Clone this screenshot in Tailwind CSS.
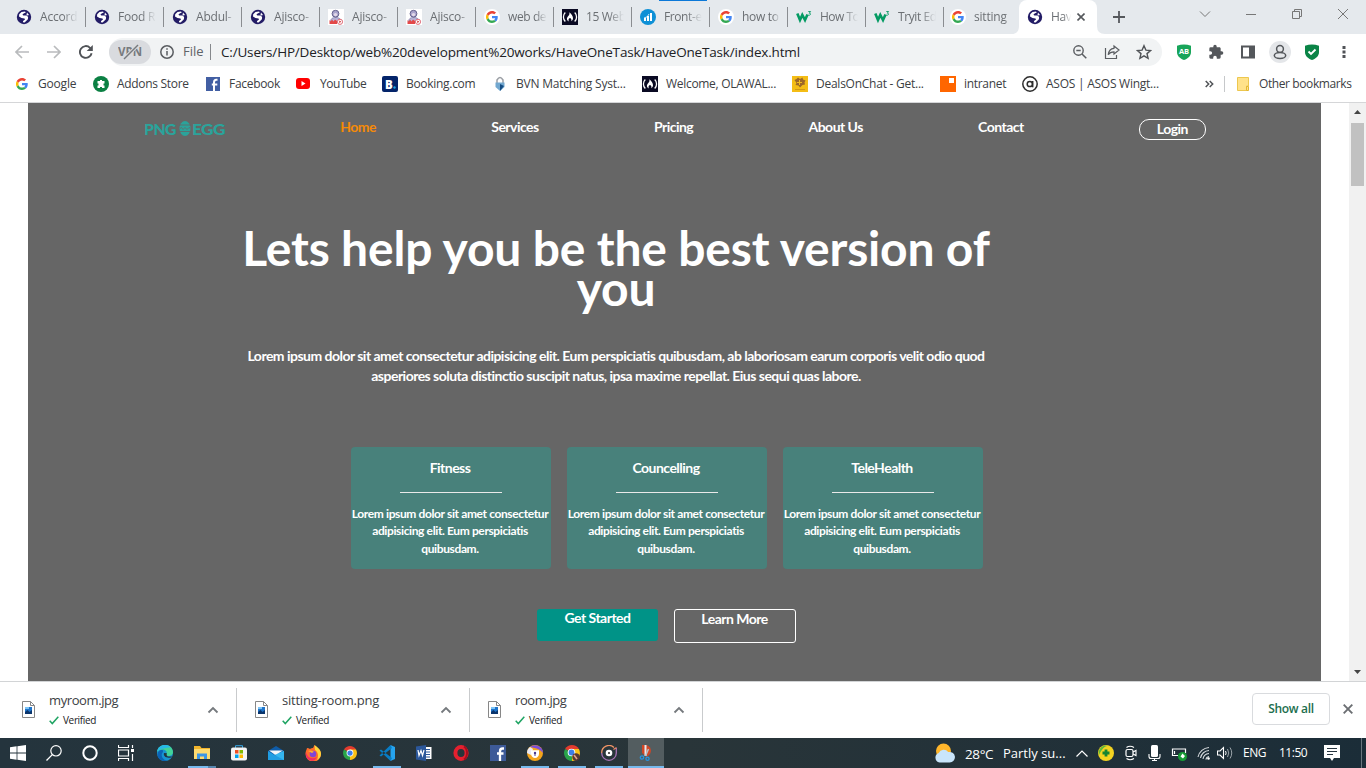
<!DOCTYPE html>
<html lang="en">
<head>
<meta charset="utf-8">
<title>HaveOneTask</title>
<script src="https://cdn.jsdelivr.net/npm/@tailwindcss/browser@4"></script>
</head>
<body class="w-[1366px] h-[768px] overflow-hidden bg-white font-['Open_Sans',sans-serif] text-[12px] text-[#3c4043]">
<svg class="hidden">
  <symbol id="globe" viewBox="0 0 16 16"><circle cx="8" cy="8" r="7.2" fill="#231c66"/><path d="M3.200 5.200 5.500 3l3.500-.6.800 1-2.200 1.200-1.200 1.200 1 .8h3.200l1.500 1.500-.2 2.200-2 1.900-1.300 1.300-1.700-.3.200-1.300 1.900-1.300-.5-1.200-3-.3L3 7.500z" fill="#fff"/><path d="m11 3.500 2 2.500-1.500.6-1-.6z" fill="#fff"/></symbol>
  <symbol id="google" viewBox="0 0 48 48"><path fill="#EA4335" d="M24 9.500c3.540 0 6.710 1.220 9.210 3.600l6.850-6.850C35.900 2.380 30.470 0 24 0 14.620 0 6.510 5.380 2.560 13.220l7.980 6.190C12.430 13.720 17.740 9.500 24 9.500z"/><path fill="#4285F4" d="M46.980 24.550c0-1.570-.15-3.090-.38-4.550H24v9.020h12.940c-.58 2.960-2.260 5.480-4.780 7.180l7.730 6c4.510-4.180 7.090-10.360 7.090-17.650z"/><path fill="#FBBC05" d="M10.530 28.590a14.500 14.500 0 0 1 0-9.180l-7.980-6.190a24 24 0 0 0 0 21.560z"/><path fill="#34A853" d="M24 48c6.480 0 11.930-2.130 15.890-5.810l-7.730-6c-2.150 1.450-4.920 2.300-8.160 2.300-6.260 0-11.570-4.220-13.470-9.910l-7.980 6.190C6.510 42.620 14.620 48 24 48z"/></symbol>
  <symbol id="googletab" viewBox="0 0 16 16"><circle cx="8" cy="8" r="8" fill="#fff"/><use href="#google" x="2" y="2" width="12" height="12"/></symbol>
  <symbol id="person" viewBox="0 0 16 16"><path fill="#fff" d="M0 0h16v16H0z"/><path d="M2.500 13.500c0-4 1.800-5 5.500-5s5 2 5 4" fill="#b7b4d8" stroke="#7d7aa8" stroke-width=".7"/><circle cx="7.500" cy="4.700" r="3.400" fill="#a9a4cc" stroke="#66628e"/><circle cx="7.500" cy="5.600" r="1.700" fill="#e3d9e8"/><path d="M1.500 15v-4l1.200 1.500L4 10.500l1.500 2 1.500-2 2 1.500v3z" fill="#e34848"/><circle cx="12" cy="12.800" r="2.600" fill="#fff" stroke="#df6b77"/><path d="M11.300 11.500v2.600l2-1.300z" fill="#c22"/></symbol>
  <symbol id="fcc" viewBox="0 0 16 16"><path fill="#0a0a23" d="M0 0h16v16H0z"/><path d="M3.300 3.500C.8 6 .8 10 3.300 12.500M12.700 3.500c2.500 2.500 2.500 6.500 0 9" stroke="#fff" stroke-width="1.300" fill="none"/><path d="M7.200 3.300c2.200 1.300 3.700 4 3.800 5.700.1 1.700-.8 2.800-2 3.300.8-1.300.6-2-.6-3.300-.4.500-.8.400-.8-.1-1.200 1.100-1.500 2.300-.6 3.400-3-1-2.300-3.800-.5-5.600.9-.9 1.200-1.900.7-3.400z" fill="#fff"/></symbol>
  <symbol id="bars" viewBox="0 0 16 16"><circle cx="8" cy="8" r="8" fill="#0e90d6"/><path d="M4 9h2v3H4zM7 7h2v5H7zM10 4h2v8h-2z" fill="#fff"/><path d="M4 9q4-.5 5-4" fill="none" stroke="#fff" stroke-width=".8"/></symbol>
  <symbol id="w3" viewBox="0 0 16 16"><path d="M1.300 4.500 4 11l2.300-5L9 11l2.500-5.500" fill="none" stroke="#049b63" stroke-width="2.600"/><path d="M12.300 2.500h2.300L13.300 4.200c2 0 1.700 2.300-1 2" fill="none" stroke="#049b63" stroke-width=".9"/></symbol>
  <symbol id="imgfile" viewBox="0 0 13 17"><path d="M.5.500h8l4 4v12H.5z" fill="#fff" stroke="#878787"/><path d="M8.500.500v4h4" fill="none" stroke="#878787"/><path fill="#1f75cb" d="M3 6h7v7H3z"/><path d="m3 11 2.500-2 2 2L10 9v4H3z" fill="#0b356c"/><path fill="#7cc5f8" d="M3 6h4v2H3z"/></symbol>
  <symbol id="up" viewBox="0 0 12 8"><path d="m1.500 6.500 4.500-4.500 4.500 4.500" fill="none" stroke="#75797d" stroke-width="1.800"/></symbol>
  <symbol id="tick" viewBox="0 0 10 9"><path d="m.7 4.700 2.600 2.900L9.300.8" fill="none" stroke="#1fa463" stroke-width="1.500"/></symbol>
</svg>

<div class="flex h-full flex-col">
<!-- tab strip -->
<header class="relative flex h-[34px] shrink-0 bg-[#e5e9ed] pl-2 text-[#6b6f73]">
  <div class="absolute left-[659px] top-0 h-px w-12 bg-[#0b78d8]"></div>
  <div class="flex w-[1011px] shrink-0 tracking-[-0.2px]">
    <div class="flex min-w-0 flex-1 items-center pl-2"><svg class="size-4 shrink-0"><use href="#globe"/></svg><span class="ml-2 w-[38px] whitespace-nowrap mask-r-from-60%">Accord</span><i class="ml-auto h-5 w-px bg-[#8a8d91]"></i></div>
    <div class="flex min-w-0 flex-1 items-center pl-2"><svg class="size-4 shrink-0"><use href="#globe"/></svg><span class="ml-2 w-[38px] whitespace-nowrap mask-r-from-60%">Food R</span><i class="ml-auto h-5 w-px bg-[#8a8d91]"></i></div>
    <div class="flex min-w-0 flex-1 items-center pl-2"><svg class="size-4 shrink-0"><use href="#globe"/></svg><span class="ml-2 w-[38px] whitespace-nowrap mask-r-from-80%">Abdul-</span><i class="ml-auto h-5 w-px bg-[#8a8d91]"></i></div>
    <div class="flex min-w-0 flex-1 items-center pl-2"><svg class="size-4 shrink-0"><use href="#globe"/></svg><span class="ml-2 w-[38px] whitespace-nowrap mask-r-from-80%">Ajisco-</span><i class="ml-auto h-5 w-px bg-[#8a8d91]"></i></div>
    <div class="flex min-w-0 flex-1 items-center pl-2"><svg class="size-4 shrink-0"><use href="#person"/></svg><span class="ml-2 w-[38px] whitespace-nowrap mask-r-from-80%">Ajisco-</span><i class="ml-auto h-5 w-px bg-[#8a8d91]"></i></div>
    <div class="flex min-w-0 flex-1 items-center pl-2"><svg class="size-4 shrink-0"><use href="#person"/></svg><span class="ml-2 w-[38px] whitespace-nowrap mask-r-from-80%">Ajisco-</span><i class="ml-auto h-5 w-px bg-[#8a8d91]"></i></div>
    <div class="flex min-w-0 flex-1 items-center pl-2"><svg class="size-4 shrink-0"><use href="#googletab"/></svg><span class="ml-2 w-[39px] whitespace-nowrap tracking-[-0.4px] mask-r-from-70%">web de</span><i class="ml-auto h-5 w-px bg-[#8a8d91]"></i></div>
    <div class="flex min-w-0 flex-1 items-center pl-2"><svg class="size-4 shrink-0"><use href="#fcc"/></svg><span class="ml-2 w-[38px] whitespace-nowrap tracking-[-0.4px] mask-r-from-60%">15 Web</span><i class="ml-auto h-5 w-px bg-[#8a8d91]"></i></div>
    <div class="flex min-w-0 flex-1 items-center pl-2"><svg class="size-4 shrink-0"><use href="#bars"/></svg><span class="ml-2 w-[38px] whitespace-nowrap tracking-[-0.4px] mask-r-from-60%">Front-e</span><i class="ml-auto h-5 w-px bg-[#8a8d91]"></i></div>
    <div class="flex min-w-0 flex-1 items-center pl-2"><svg class="size-4 shrink-0"><use href="#googletab"/></svg><span class="ml-2 w-[38px] whitespace-nowrap tracking-[-0.3px] mask-r-from-80%">how to</span><i class="ml-auto h-5 w-px bg-[#8a8d91]"></i></div>
    <div class="flex min-w-0 flex-1 items-center pl-2"><svg class="size-4 shrink-0"><use href="#w3"/></svg><span class="ml-2 w-[38px] whitespace-nowrap tracking-[-0.5px] mask-r-from-60%">How To</span><i class="ml-auto h-5 w-px bg-[#8a8d91]"></i></div>
    <div class="flex min-w-0 flex-1 items-center pl-2"><svg class="size-4 shrink-0"><use href="#w3"/></svg><span class="ml-2 w-[38px] whitespace-nowrap tracking-[-0.4px] mask-r-from-60%">Tryit Ed</span><i class="ml-auto h-5 w-px bg-[#8a8d91]"></i></div>
    <div class="flex w-[75px] shrink-0 items-center pl-[6px]"><svg class="size-4 shrink-0"><use href="#googletab"/></svg><span class="ml-2 w-[38px] whitespace-nowrap mask-r-from-80%">sitting</span></div>
  </div>
  <div class="relative flex w-[78px] shrink-0 items-center rounded-t-lg bg-white pl-2"><svg class="absolute -left-2 bottom-0 size-2" viewBox="0 0 8 8"><path d="M8 0v8H0q8 0 8-8" fill="#fff"/></svg><svg class="absolute -right-2 bottom-0 size-2" viewBox="0 0 8 8"><path d="M0 0v8h8Q0 8 0 0" fill="#fff"/></svg><svg class="size-4 shrink-0"><use href="#globe"/></svg><span class="ml-2 w-[20px] whitespace-nowrap tracking-[-0.4px] mask-r-from-60%">Hav</span><svg class="ml-[6px] size-2" viewBox="0 0 8 8"><path d="m.5.500 7 7m0-7-7 7" stroke="#55585c" stroke-width="1.600"/></svg></div>
  <svg class="ml-4 mt-[11px] h-[12px] w-[12px]" viewBox="0 0 12 12"><path d="M6 0v12M0 6h12" stroke="#55585c" stroke-width="1.800"/></svg>
  <svg class="ml-[74px] mt-[10px] h-2 w-3" viewBox="0 0 12 8"><path d="m1 1.500 5 5 5-5" fill="none" stroke="#777" stroke-width="1"/></svg>
  <svg class="ml-[35px] mt-[14px] h-px w-[10px]" viewBox="0 0 10 1"><path d="M0 .5h10" stroke="#777"/></svg>
  <svg class="ml-[36px] mt-[9px] size-[10px]" viewBox="0 0 10 10"><path d="M.5 2.500h7v7h-7zM2.500 2.500v-2h7v7h-2" fill="none" stroke="#777"/></svg>
  <svg class="ml-[36px] mt-[9px] size-[10px]" viewBox="0 0 10 10"><path d="m0 0 10 10M10 0 0 10" stroke="#777"/></svg>
</header>

<!-- toolbar -->
<div class="flex h-[36px] shrink-0 items-center pl-[15px]">
  <svg class="size-[14px]" viewBox="0 0 14 14"><path d="M14 7H1.500M7 1 1 7l6 6" fill="none" stroke="#b9bbbd" stroke-width="1.700"/></svg>
  <svg class="ml-[18px] size-[14px]" viewBox="0 0 14 14"><path d="M0 7h12.500M7 1l6 6-6 6" fill="none" stroke="#b9bbbd" stroke-width="1.700"/></svg>
  <svg class="ml-[18px] size-[14px]" viewBox="0 0 14 14"><path d="M12.600 8.200A5.900 5.900 0 1 1 11 2.800l1 1" fill="none" stroke="#505357" stroke-width="1.900"/><path d="M13.800 0v6.100H7.700z" fill="#505357"/></svg>
  <div class="ml-4 flex h-7 w-[1053px] items-center rounded-full bg-[#f1f3f4] text-[14px] text-[#202124]">
    <div class="flex h-6 w-[42px] items-center justify-center rounded-full bg-[#d9dbdf]">
      <svg class="h-4 w-6" viewBox="0 0 24 16"><text x="0" y="12.300" font-family="Open Sans" font-weight="700" font-size="11.500" textLength="24" fill="#777a7e">VPN</text><path d="M6 15 20 1" stroke="#d9dbdf" stroke-width="3.500"/><path d="M6 15 20 1" stroke="#777a7e" stroke-width="1.500"/></svg>
    </div>
    <svg class="ml-[9px] size-[14px]" viewBox="0 0 14 14"><circle cx="7" cy="7" r="6.200" fill="none" stroke="#5a5d61" stroke-width="1.500"/><path d="M7 6v4.500M7 3.300v1.500" stroke="#5a5d61" stroke-width="1.500"/></svg>
    <span class="ml-[9px] w-[27px] text-[13px] text-[#5f6368]">File</span><i class="h-4 w-px bg-[#85888c]"></i>
    <span class="ml-[10px] w-[849px] whitespace-nowrap text-[13.500px] tracking-[-0.18px]">C:/Users/HP/Desktop/web%20development%20works/HaveOneTask/HaveOneTask/index.html</span>
    <svg class="ml-[2px] size-4 shrink-0" viewBox="0 0 16 16"><circle cx="6.500" cy="6.500" r="4.700" fill="none" stroke="#5a5d61" stroke-width="1.400"/><path d="M4.300 6.500h4.400M10 10l4.300 4.300" stroke="#5a5d61" stroke-width="1.500"/></svg>
    <svg class="ml-4 size-4 shrink-0" viewBox="0 0 16 16"><path d="M1.500 4v10.500h11V11M10 2l5 4-5 4V7.800c-3 0-4.600 1-5.800 3C4.600 7 6.500 4.600 10 4.300z" fill="none" stroke="#5a5d61" stroke-width="1.200"/></svg>
    <svg class="ml-4 size-4 shrink-0" viewBox="0 0 16 16"><path d="m8 1.700 1.900 4.400 4.700.4-3.600 3.100 1.100 4.700L8 11.800l-4.100 2.500L5 9.600 1.400 6.500l4.700-.4z" fill="none" stroke="#505357" stroke-width="1.400"/></svg>
  </div>
  <svg class="ml-[14px] size-4 shrink-0" viewBox="0 0 16 16"><path d="M1 1.800Q8-1 15 1.800V8c0 4-3 6.500-7 8-4-1.500-7-4-7-8z" fill="#18a55a"/><text x="8" y="10" text-anchor="middle" font-family="Open Sans" font-size="7.500" font-weight="700" fill="#fff">AB</text></svg>
  <svg class="ml-4 size-4 shrink-0" viewBox="0 0 24 24"><path d="M20.500 11H19V7c0-1.100-.9-2-2-2h-4V3.500a2.500 2.500 0 0 0-5 0V5H4a2 2 0 0 0-2 2v3.800h1.500a2.700 2.700 0 0 1 0 5.400H2V20c0 1.100.9 2 2 2h3.800v-1.500a2.700 2.700 0 0 1 5.400 0V22H17a2 2 0 0 0 2-2v-4h1.500a2.500 2.500 0 0 0 0-5z" fill="#54575b"/></svg>
  <svg class="ml-4 size-4 shrink-0" viewBox="0 0 16 16"><path d="M2 2.500h12v11H2z" fill="none" stroke="#54575b" stroke-width="2"/><path d="M9 2h5v12H9z" fill="#54575b"/></svg>
  <div class="ml-[13px] flex size-[22px] shrink-0 items-center justify-center rounded-full bg-[#e4e6e9]"><svg class="size-4" viewBox="0 0 16 16"><circle cx="8" cy="5" r="3.400" fill="none" stroke="#54575b" stroke-width="1.500"/><ellipse cx="8" cy="11.500" rx="5.700" ry="3" fill="#e4e6e9" stroke="#54575b" stroke-width="1.500"/></svg></div>
  <svg class="ml-[13px] size-4 shrink-0" viewBox="0 0 16 16"><path d="M1 1.800Q8-1 15 1.800V8c0 4-3 6.500-7 8-4-1.500-7-4-7-8z" fill="#0a8446"/><path d="m4.500 7.500 2.500 2.500 4.500-4.500" fill="none" stroke="#fff" stroke-width="1.900"/></svg>
  <svg class="ml-[22px] h-[14px] w-1 shrink-0" viewBox="0 0 4 14"><path d="M.5 1h3v3h-3zM.5 5.500h3v3h-3zM.5 10h3v3h-3z" fill="#505357"/></svg>
</div>

<!-- bookmarks -->
<div class="flex h-[33px] shrink-0 items-center border-b border-[#d5d6d8] pb-[5px] pl-4 whitespace-nowrap">
  <div class="flex w-[77px] items-center"><svg class="size-3"><use href="#google"/></svg><span class="ml-[10px] tracking-[-0.2px]">Google</span></div>
  <div class="flex w-[112px] items-center"><svg class="size-4" viewBox="0 0 16 16"><circle cx="8" cy="8" r="8" fill="#0b8043"/><path d="M4.500 5H7V4h2v1h2.500v2.500h-1v2h1V12H9v-1H7v1H4.500V9.500h1v-2h-1z" fill="#fff"/></svg><span class="ml-2 tracking-[-0.3px]">Addons Store</span></div>
  <div class="flex w-[91px] items-center"><svg class="ml-px size-[14px]" viewBox="0 0 14 14"><path fill="#425fa3" d="M0 0h14v14H0z"/><path d="M11.500 2.800h-1.200C8.500 2.800 8 4 8 5.500V14M5.800 7.500h5.500" fill="none" stroke="#fff" stroke-width="2"/></svg><span class="ml-[9px] tracking-[-0.3px]">Facebook</span></div>
  <div class="flex w-[86px] items-center"><svg class="h-[11px] w-[14px]" viewBox="0 0 14 11"><rect width="14" height="11" rx="3" fill="#f00"/><path d="M5.500 3v5L9.500 5.500z" fill="#fff"/></svg><span class="ml-[10px] tracking-[-0.45px]">YouTube</span></div>
  <div class="flex w-[110px] items-center"><svg class="size-4" viewBox="0 0 16 16"><rect width="16" height="16" rx="2" fill="#04246a"/><text x="3" y="12.500" font-family="Open Sans" font-weight="800" font-size="11.500" fill="#fff">B</text><circle cx="12.500" cy="11.500" r="1.200" fill="#1ba5e4"/></svg><span class="ml-2 tracking-[-0.3px]">Booking.com</span></div>
  <div class="flex w-[150px] items-center"><svg class="size-4" viewBox="0 0 16 16"><path d="M5 7V4q3-5 6 0v3" fill="none" stroke="#9b9fa5" stroke-width="1.500"/><path d="M3.500 6.500h9V11L8 15l-4.500-4z" fill="#72a8d0"/><path d="m8 8 4 2-4 5z" fill="#164d83"/></svg><span class="ml-2 tracking-[-0.22px]">BVN Matching Syst...</span></div>
  <div class="flex w-[150px] items-center"><svg class="size-4"><use href="#fcc"/></svg><span class="ml-2 tracking-[-0.3px]">Welcome, OLAWAL...</span></div>
  <div class="flex w-[148px] items-center"><svg class="size-4" viewBox="0 0 16 16"><path fill="#f4bd16" d="M0 0h16v16H0z"/><path d="m2.500 4 2-1 1.500-1.500L8 3l2.500-1.500.5 2 2.500 1-1 2 .5 2-2.500.5L8 11.500l-1.500-2-3-.5 1-2z" fill="#9c6728"/><path d="M5 6.500h5M7.500 4v5" stroke="#f1b920"/><path d="M3 13.500h10" stroke="#d19a16"/></svg><span class="ml-2 tracking-[-0.25px]">DealsOnChat - Get...</span></div>
  <div class="flex w-[82px] items-center"><svg class="size-4" viewBox="0 0 16 16"><path fill="#ff6600" d="M0 0h16v16H0z"/><path fill="#fff" d="M9 2h5v5H9z"/></svg><span class="ml-2 tracking-[-0.3px]">intranet</span></div>
  <div class="flex w-[183px] items-center"><svg class="size-4" viewBox="0 0 16 16"><circle cx="8" cy="8" r="7.200" fill="none" stroke="#2d2d2d" stroke-width="1.500"/><circle cx="7.800" cy="8" r="2.600" fill="none" stroke="#2d2d2d" stroke-width="1.500"/><path d="M10.700 5v6.300" stroke="#2d2d2d" stroke-width="1.500"/></svg><span class="ml-2 tracking-[-0.25px]">ASOS | ASOS Wingt...</span></div>
  <svg class="h-2 w-[9px]" viewBox="0 0 9 8"><path d="m.7 1 3 3-3 3m4-6 3 3-3 3" fill="none" stroke="#505357" stroke-width="1.500"/></svg>
  <i class="ml-[10px] h-4 w-px bg-[#c6c8ca]"></i>
  <svg class="ml-3 h-[14px] w-3" viewBox="0 0 12 14"><path d="M.5.500h11V9H9.500v4.500h-9z" fill="#ffe28a" stroke="#edc74e"/><path d="M9.500 9.500h2v4h-2z" fill="#ffe28a" stroke="#e3b732"/></svg>
  <span class="ml-[10px] tracking-[-0.4px]">Other bookmarks</span>
</div>

<!-- page -->
<main class="flex h-[578px] shrink-0 pl-7 font-[Lato,sans-serif] text-[14px] font-bold leading-5 tracking-[-0.52px] text-white">
  <div class="w-[1293px] bg-[#666]">
    <nav class="ml-[117px] flex w-[1061px] items-start justify-between pt-4">
      <svg class="mt-[1px] h-[18px] w-20" viewBox="0 0 80 18"><g font-family="Lato" font-weight="900" font-size="15.500" fill="#2ba39b"><text x="-1" y="14.500" textLength="32" lengthAdjust="spacingAndGlyphs">PNG</text><text x="47" y="14.500" textLength="33" lengthAdjust="spacingAndGlyphs">EGG</text></g><ellipse cx="40" cy="8.500" rx="5.500" ry="7.500" fill="#2ba39b"/><path d="M34 5h12M34 11.500h12M35 8.500l1.500-1 1.500 2 2-2 2 2 2-2 1.500 1" fill="none" stroke="#666" stroke-width=".8"/></svg>
      <a class="-mt-[2px] text-[#f58a07]">Home</a><a class="-mt-[2px]">Services</a><a class="-mt-[2px]">Pricing</a><a class="-mt-[2px]">About Us</a><a class="-mt-[2px]">Contact</a>
      <a class="flex h-[21px] w-[67px] items-center justify-center rounded-[10px] border border-white pb-[2px] leading-none">Login</a>
    </nav>
    <h1 class="ml-[208px] mt-[88px] w-[760px] text-center text-[48px] leading-10 tracking-[-0.18px]">Lets help you be the best version of you</h1>
    <p class="ml-[208px] mt-[38px] w-[760px] text-center">Lorem ipsum dolor sit amet consectetur adipisicing elit. Eum perspiciatis quibusdam, ab laboriosam earum corporis velit odio quod<br>asperiores soluta distinctio suscipit natus, ipsa maxime repellat. Eius sequi quas labore.</p>
    <section class="ml-[323px] mt-[61px] flex gap-4 text-center">
      <div class="h-[122px] w-[200px] rounded bg-[#48817b] pr-[2px] pt-[11px]"><h3>Fitness</h3><hr class="ml-[49px] mt-[14px] w-[102px] border-t-1 border-[#e9e9e9]"><p class="mt-[12px] text-[12px] leading-[17.400px] tracking-[-0.38px] whitespace-nowrap">Lorem ipsum dolor sit amet consectetur<br>adipisicing elit. Eum perspiciatis<br>quibusdam.</p></div>
      <div class="h-[122px] w-[200px] rounded bg-[#48817b] pr-[2px] pt-[11px]"><h3>Councelling</h3><hr class="ml-[49px] mt-[14px] w-[102px] border-t-1 border-[#e9e9e9]"><p class="mt-[12px] text-[12px] leading-[17.400px] tracking-[-0.38px] whitespace-nowrap">Lorem ipsum dolor sit amet consectetur<br>adipisicing elit. Eum perspiciatis<br>quibusdam.</p></div>
      <div class="h-[122px] w-[200px] rounded bg-[#48817b] pr-[2px] pt-[11px]"><h3>TeleHealth</h3><hr class="ml-[49px] mt-[14px] w-[102px] border-t-1 border-[#e9e9e9]"><p class="mt-[12px] text-[12px] leading-[17.400px] tracking-[-0.38px] whitespace-nowrap">Lorem ipsum dolor sit amet consectetur<br>adipisicing elit. Eum perspiciatis<br>quibusdam.</p></div>
    </section>
    <div class="ml-[510px] mt-10 flex items-start gap-4 text-center">
      <a class="-ml-[1px] h-8 w-[121px] rounded-[3px] bg-[#009387] leading-[18px]">Get Started</a>
      <a class="h-[34px] w-[122px] rounded-[3px] border border-white pr-px leading-[18px]">Learn More</a>
    </div>
  </div>
  <div class="ml-7 flex w-[17px] flex-col items-center bg-[#f1f1f1] pb-[7px] pt-[7px]">
    <svg class="h-1 w-[7px]" viewBox="0 0 7 4"><path d="M3.500 0 7 4H0z" fill="#454545"/></svg>
    <div class="mt-[9px] h-[63px] w-[13px] bg-[#c1c1c1]"></div>
    <svg class="mt-auto h-1 w-[7px]" viewBox="0 0 7 4"><path d="M0 0h7L3.500 4z" fill="#454545"/></svg>
  </div>
</main>

<!-- downloads -->
<div class="flex h-[57px] shrink-0 items-center border-t border-[#d2d4d6]">
  <div class="flex h-11 w-[237px] items-center border-r border-[#c9cbcd] pl-[22px]"><svg class="-mt-[2px] h-[17px] w-[13px]"><use href="#imgfile"/></svg><div class="ml-[14px] w-[158px]"><div class="text-[13px] leading-5 tracking-[-0.4px]">myroom.jpg</div><div class="flex items-center gap-1 text-[10px] leading-5 tracking-[-0.35px] text-[#202124]"><svg class="h-[9px] w-[10px]"><use href="#tick"/></svg>Verified</div></div><svg class="h-2 w-3"><use href="#up"/></svg></div>
  <div class="flex h-11 w-[233px] items-center border-r border-[#c9cbcd] pl-[18px]"><svg class="-mt-[2px] h-[17px] w-[13px]"><use href="#imgfile"/></svg><div class="ml-[14px] w-[158px]"><div class="text-[13px] leading-5 tracking-[-0.22px]">sitting-room.png</div><div class="flex items-center gap-1 text-[10px] leading-5 tracking-[-0.35px] text-[#202124]"><svg class="h-[9px] w-[10px]"><use href="#tick"/></svg>Verified</div></div><svg class="h-2 w-3"><use href="#up"/></svg></div>
  <div class="flex h-11 w-[233px] items-center border-r border-[#c9cbcd] pl-[18px]"><svg class="-mt-[2px] h-[17px] w-[13px]"><use href="#imgfile"/></svg><div class="ml-[14px] w-[158px]"><div class="text-[13px] leading-5 tracking-[-0.4px]">room.jpg</div><div class="flex items-center gap-1 text-[10px] leading-5 tracking-[-0.35px] text-[#202124]"><svg class="h-[9px] w-[10px]"><use href="#tick"/></svg>Verified</div></div><svg class="h-2 w-3"><use href="#up"/></svg></div>
  <div class="-mt-[2px] ml-auto flex h-8 w-[78px] items-center justify-center rounded border border-[#d9dbde] text-[12px] font-semibold tracking-[-0.3px] text-[#216e4d]">Show all</div>
  <svg class="-mt-[2px] ml-[13px] mr-[13px] size-[10px]" viewBox="0 0 10 10"><path d="m.7.700 8.600 8.600m0-8.600L.7 9.300" stroke="#6b6e72" stroke-width="1.900"/></svg>
</div>

<!-- taskbar -->
<footer class="flex h-[30px] shrink-0 items-center bg-linear-to-r from-[#24343d] via-[#293539] to-[#1b2d38] text-white">
  <div class="flex w-9 justify-center"><svg class="size-4" viewBox="0 0 16 16"><path d="m0 2.200 6.600-.9v6.300H0zM7.400 1.200 16 0v7.600H7.400zM0 8.400h6.600v6.300L0 13.800zM7.400 8.400H16V16l-8.600-1.200z" fill="#fff"/></svg></div>
  <div class="flex w-9 justify-center"><svg class="size-4" viewBox="0 0 16 16"><circle cx="10" cy="5.800" r="5.200" fill="none" stroke="#fff" stroke-width="1.200"/><path d="M6.300 9.600.5 15.500" stroke="#fff" stroke-width="1.300"/></svg></div>
  <div class="flex w-9 justify-center"><svg class="size-4" viewBox="0 0 16 16"><circle cx="8" cy="8" r="6.700" fill="none" stroke="#fff" stroke-width="2"/></svg></div>
  <div class="flex w-9 justify-center"><svg class="size-4" viewBox="0 0 16 16"><path d="M.5 0v2.500h10V0M.5 5h10v6H.5zM.5 16v-2.500h10V16M14.500 0v3M14.500 9v7" fill="none" stroke="#fff" stroke-width="1.200"/><path fill="#fff" d="M13 4h3v3h-3z"/></svg></div>
  <div class="ml-[2px] flex w-[37px] justify-center"><svg class="size-4" viewBox="0 0 16 16"><circle cx="8" cy="8" r="8" fill="#1794d1"/><path d="M0 7C1 2 4 0 8 0c5 0 8 3.500 8 7 0 3-2.500 4-4.500 4s-3-1-2-2C10.500 6 8 4.500 5.500 4.500 3 4.500 1 5.500 0 7z" fill="#42d399"/><path d="M0 7C1 2 4 0 8 0c2 0 4 .6 5.500 2C10 3.500 3 2.500 0 7z" fill="#27b9e7"/><path d="M6 7c-3 3-.5 8 4 8.700-5 1.300-9.500-2-9.500-6C.5 6 4 4 6 5.500z" fill="#0b63b5"/><path d="M7 8c-1 3 2 5.500 7 4.500l1-1.300c-3 1-6.500.3-5-3z" fill="#24343d"/></svg></div>
  <div class="relative flex h-full w-[37px] items-center justify-center"><svg class="size-4" viewBox="0 0 16 16"><path d="M0 1h6l1.500 2H16v11H0z" fill="#f2b52c"/><path d="M0 4h16v10H0z" fill="#ffdb70"/><path d="M3 14V8.500h10V14h-3v-2.500H6V14z" fill="#3e96e5"/></svg><i class="absolute bottom-0 left-[5px] h-[2px] w-5 bg-[#76b9ed]"></i><i class="absolute bottom-0 left-[25px] h-[2px] w-2 bg-[#5686ae]"></i></div>
  <div class="flex w-[37px] justify-center"><svg class="size-4" viewBox="0 0 16 16"><path d="M4.500 3V.7h7V3" fill="none" stroke="#38a8e6"/><rect y="2.500" width="16" height="13" rx="2" fill="#f4f4f4"/><path fill="#f05022" d="M4 5h3.500v3.500H4z"/><path fill="#80bb00" d="M8.500 5H12v3.500H8.500z"/><path fill="#00a3ee" d="M4 9.500h3.500V13H4z"/><path fill="#ffb900" d="M8.500 9.500H12V13H8.500z"/></svg></div>
  <div class="flex w-[37px] justify-center"><svg class="size-4" viewBox="0 0 16 16"><path d="m0 6 8-5 8 5v9H0z" fill="#0f5ca8"/><path d="M0 6v9h16V6l-8 5z" fill="#1f9de3"/><path d="M16 6v9L6 9.800z" fill="#35b6ef"/><path d="M1 5.500h14L9.500 8.700 7 9.800z" fill="#f1f6fa"/></svg></div>
  <div class="flex w-[37px] justify-center"><svg class="size-4" viewBox="0 0 16 16"><path d="M2 3c1 0 2 .5 3 1 1-1 2-1 3-1L9.500 0c1 1 1.500 2 3 3 2 1.500 3.500 3.500 3.500 6a7.700 7.700 0 0 1-15.500 0C.5 6.500 1.500 5 2 3z" fill="#ff6e2b"/><path d="M9.500 0C12 2 16 4 16 9c0 3-2 5-4 6 2-4 1-8-2-10z" fill="#ffd53b"/><path d="M1 7c1 5 5 8 11 5-1 2.500-3 4-5 3.700C3 15.500 0 12 1 7z" fill="#f32c62"/><circle cx="8" cy="9" r="3.300" fill="#8145d8"/><path d="M3 6c2-1.500 5 .2 6 .8L7 8z" fill="#ffb12c"/></svg></div>
  <div class="flex w-[37px] justify-center"><svg class="size-[14px]" viewBox="0 0 16 16"><path d="M8 8 1.100 4a8 8 0 0 1 13.800 0z" fill="#e33b2e"/><path d="M8 8V4h6.900A8 8 0 0 1 8 16z" fill="#fbc116"/><path d="M8 8 8 16A8 8 0 0 1 1.100 4z" fill="#29a34a"/><path d="m8 16 3.500-6L8 8z" fill="#fbc116"/><circle cx="8" cy="8" r="3.900" fill="#fff"/><circle cx="8" cy="8" r="3" fill="#3c7ee8"/></svg></div>
  <div class="relative flex h-full w-[37px] items-center justify-center"><svg class="size-4" viewBox="0 0 16 16"><path d="m11.500 0 4.500 2v12l-4.500 2z" fill="#26a4ef"/><path d="m.5 5.500 1.500-1L13 13l-1.500 3zM.5 10.500l1.500 1L13 3l-1.500-3z" fill="#087cc5"/></svg><i class="absolute bottom-0 left-[5px] h-[2px] w-7 bg-[#76b9ed]"></i></div>
  <div class="flex w-[37px] justify-center"><svg class="size-4" viewBox="0 0 16 16"><path d="M7 2h8.500v12H7z" fill="#fff"/><path d="M10 4.500h4M10 7h4M10 9.500h4M10 12h4" stroke="#2b579a"/><path d="m0 1.500 10-1.500v16L0 14.500z" fill="#2b579a"/><path d="m2 5 1 5.500L5 5.500l1.500 5L8 5" fill="none" stroke="#fff" stroke-width="1.200"/></svg></div>
  <div class="flex w-[37px] justify-center"><svg class="size-4" viewBox="0 0 16 16"><ellipse cx="8" cy="8" rx="5.600" ry="6" fill="none" stroke="#e5202f" stroke-width="4"/><path d="M11 1.500c4 2.500 4 10.500 0 13" fill="none" stroke="#a70e1c" stroke-width="2"/></svg></div>
  <div class="flex w-[37px] justify-center"><svg class="size-4" viewBox="0 0 16 16"><path fill="#3d5a98" d="M0 0h16v16H0z"/><path d="M14 3.500h-1.500C10.500 3.500 10 5 10 6.500V16M7 8.500h6.500" fill="none" stroke="#fff" stroke-width="2.300"/></svg></div>
  <div class="relative flex h-full w-[37px] items-center justify-center"><svg class="size-4" viewBox="0 0 16 16"><circle cx="8" cy="8" r="8" fill="#f5a51c"/><path d="M3 2a8 8 0 0 1 13 6c-2-3-6-5-13-6z" fill="#7c4edb"/><path d="M0 8c0-3 1-4.500 3-6l3 2-2 6z" fill="#e9eaf5"/><path d="M4 5.200h8V9c0 2-2 4-4 4s-4-2-4-4z" fill="#fff"/><circle cx="8" cy="8" r="1.200" fill="#4a3b8d"/><path d="M8 8v3" stroke="#4a3b8d"/></svg><i class="absolute bottom-0 left-[5px] h-[2px] w-7 bg-[#76b9ed]"></i></div>
  <div class="relative flex h-full w-[37px] items-center justify-center"><svg class="size-4" viewBox="0 0 16 16"><path d="M8 8 1.100 4a8 8 0 0 1 13.800 0z" fill="#e33b2e"/><path d="M8 8V4h6.900A8 8 0 0 1 8 16z" fill="#fbc116"/><path d="M8 8 8 16A8 8 0 0 1 1.100 4z" fill="#29a34a"/><circle cx="7.500" cy="7.500" r="3.800" fill="#fff"/><circle cx="7.500" cy="7.500" r="2.900" fill="#3c7ee8"/><circle cx="12" cy="12" r="3.700" fill="#563733"/><path d="m10 10 3 4" stroke="#e6a28a" stroke-width="1.500"/></svg><i class="absolute bottom-0 left-[5px] h-[2px] w-7 bg-[#76b9ed]"></i></div>
  <div class="relative flex h-full w-[37px] items-center justify-center"><svg class="size-4" viewBox="0 0 16 16"><path d="M13 2.500A7.300 7.300 0 0 0 .7 8" fill="none" stroke="#f19466" stroke-width="1.300"/><path d="M.7 8A7.300 7.300 0 0 0 15.300 8V3" fill="none" stroke="#a873b6" stroke-width="1.300"/><path d="m12.500 4.500 3-2" stroke="#f28a67" stroke-width="1.200"/><circle cx="8" cy="8" r="3.300" fill="#fff"/><circle cx="8" cy="8" r="1.100" fill="#333"/></svg><i class="absolute bottom-0 left-[5px] h-[2px] w-7 bg-[#76b9ed]"></i></div>
  <div class="relative ml-px flex h-full w-9 items-center justify-center bg-[#535d60]"><svg class="size-4" viewBox="0 0 16 16"><path d="M4 0h4c4.500 1 6 5 4 9L9 12 4 8z" fill="#d24625"/><path d="M7.500 0v11" stroke="#e3eaf0" stroke-width="2"/><path d="M10.500 4 7.500 11" stroke="#b5c1c9" stroke-width="1.500"/><circle cx="4" cy="12.500" r="1.700" fill="none" stroke="#2793df" stroke-width="1.300"/><circle cx="9.500" cy="13.700" r="1.600" fill="none" stroke="#2793df" stroke-width="1.300"/></svg><i class="absolute bottom-0 left-0 h-[2px] w-9 bg-[#76b9ed]"></i></div>

  <svg class="ml-[270px] h-5 w-[21px]" viewBox="0 0 21 20"><circle cx="9.500" cy="8" r="7.500" fill="#ffb62b"/><path d="M5.500 19.500a5 5 0 0 1-.8-9.600 5.500 5.500 0 0 1 9.500-.8 5.300 5.300 0 1 1 1.300 10.400z" fill="#c9e5fb"/></svg>
  <span class="ml-[10px] mt-[2px] w-[38px] text-[13.500px] tracking-[-0.4px]">28°C</span>
  <span class="mt-[2px] w-[73px] whitespace-nowrap text-[13px]">Partly su...</span>
  <svg class="h-[7px] w-3" viewBox="0 0 12 7"><path d="M.5 6.500 6 1l5.500 5.500" fill="none" stroke="#fff" stroke-width="1.200"/></svg>
  <svg class="ml-[10px] size-4" viewBox="0 0 16 16"><circle cx="8" cy="8" r="8" fill="#f4d321"/><path d="M1 10C-1 4 6-1 9 1 5 2 3 6 1 10z" fill="#61ba3b"/><path d="M8 4.500v7M4.500 8h7" stroke="#168431" stroke-width="2.800"/></svg>
  <svg class="ml-[9px] size-4" viewBox="0 0 16 16"><rect x="3" y="4.500" width="7" height="7" rx="1.500" fill="none" stroke="#fff" stroke-width="1.200"/><path d="m10 7 3-1.500v5L10 9M3.500 2.500Q7 0 11 2.500M3.500 13.500Q7 16 11 13.500" fill="none" stroke="#fff" stroke-width="1.100"/></svg>
  <svg class="ml-[7px] size-4" viewBox="0 0 16 16"><rect x="5" width="7" height="12" rx="1.500" fill="#fff"/><path d="M3 9v2.500q0 2 2 2h7q2 0 2-2V9M8.500 13v3M6 15.500h5" fill="none" stroke="#fff" stroke-width="1.100"/></svg>
  <svg class="ml-[9px] size-4" viewBox="0 0 16 16"><path d="M7 10.500H1.500V4h13v4M3.500 6v3" fill="none" stroke="#fff" stroke-width="1.200"/><circle cx="11.500" cy="11.500" r="4.500" fill="#169b35"/><path d="M11.500 8.500 14 11l-2 2.500-2.500-2zM11.500 12v3" fill="#fff"/></svg>
  <svg class="ml-[9px] size-4" viewBox="0 0 16 16"><path d="M2 12A12 12 0 0 1 13 2.500M4.500 13A9 9 0 0 1 13 5.500M7 14a6.500 6.500 0 0 1 6-5.500M9.800 14.500a4 4 0 0 1 3.200-3" fill="none" stroke="#d9dde0" stroke-width="1.100"/><circle cx="12.500" cy="13.500" r="1.300" fill="#fff"/></svg>
  <svg class="ml-[5px] size-4" viewBox="0 0 16 16"><path d="M.5 6h2.500l3.500-3.500v11L3 10H.5z" fill="none" stroke="#fff" stroke-width="1.100"/><path d="M8.500 6q1.300 2 0 4" fill="none" stroke="#fff"/><path d="M10.500 4q2.500 4 0 8M13 2.500q3.500 5.500 0 11" fill="none" stroke="#9ba4aa"/></svg>
  <span class="ml-[10px] w-[36px] tracking-[-0.5px]">ENG</span>
  <span class="w-[45px] tracking-[-0.5px]">11:50</span>
  <svg class="size-4" viewBox="0 0 16 16"><path d="M0 0h16v13h-6l-2 3-2-3H0z" fill="#fff"/><path d="M3 3.500h10M3 6.500h10M3 9.500h6" stroke="#26353f"/></svg>
  <i class="ml-auto mr-1 h-full w-px bg-[#69767e]"></i>
</footer>
</div>
</body>
</html>
